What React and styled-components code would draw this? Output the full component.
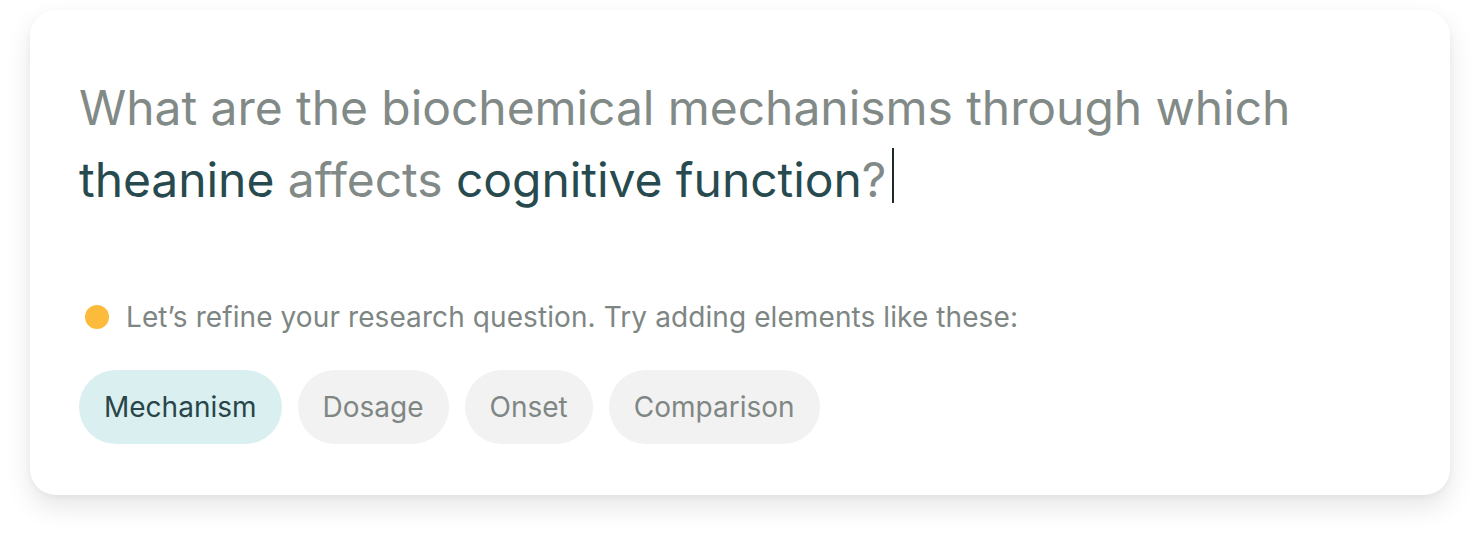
import React from "react";
import styled, { createGlobalStyle } from "styled-components";

const Global = createGlobalStyle`
  html, body { margin: 0; padding: 0; background: #ffffff; }
  body { font-family: Inter, "Noto Sans", sans-serif; -webkit-font-smoothing: antialiased; }
`;

const Page = styled.div`
  box-sizing: border-box;
  min-height: 546px;
  padding: 10px 30px 51px 30px;
`;

const Card = styled.div`
  box-sizing: border-box;
  width: 1420px;
  height: 485px;
  background: #ffffff;
  border-radius: 26px;
  box-shadow: 0 12px 26px rgba(0, 0, 0, 0.1), 0 2px 6px rgba(0, 0, 0, 0.04);
  padding: 62px 48px 50px 49px;
  display: flex;
  flex-direction: column;
`;

const Question = styled.div`
  font-size: 48px;
  line-height: 72px;
  color: #828a87;
  font-weight: 400;
  letter-spacing: -0.06px;
`;

const Key = styled.span`
  color: #274a4f;
`;

const Caret = styled.span`
  display: inline-block;
  width: 2px;
  height: 55px;
  background: #1c2a2c;
  vertical-align: -6px;
  margin-left: 6px;
`;

const Hint = styled.div`
  margin-top: 84px;
  display: flex;
  align-items: center;
  gap: 17px;
  font-size: 28px;
  line-height: 34px;
  letter-spacing: 0.09px;
  color: #7e8683;
`;

const Dot = styled.span`
  width: 24px;
  height: 24px;
  border-radius: 50%;
  background: #fcbb3b;
  flex: none;
  margin-left: 6px;
`;

const Chips = styled.div`
  margin-top: 36px;
  display: flex;
  gap: 16px;
`;

const Chip = styled.button`
  height: 74px;
  padding: 0 25px;
  border: none;
  border-radius: 37px;
  font-family: Inter, "Noto Sans", sans-serif;
  font-size: 28px;
  background: ${(p) => (p.$active ? "#daeff0" : "#f3f2f2")};
  color: ${(p) => (p.$active ? "#284649" : "#7f8784")};
  cursor: pointer;
`;

const chips = ["Mechanism", "Dosage", "Onset", "Comparison"];

export default function App() {
  return (
    <>
      <Global />
      <Page>
        <Card>
          <Question>
            What are the biochemical mechanisms through which
            <br />
            <Key>theanine</Key> affects <Key>cognitive function</Key>?
            <Caret />
          </Question>
          <Hint>
            <Dot />
            Let’s refine your research question. Try adding elements like these:
          </Hint>
          <Chips>
            {chips.map((c, i) => (
              <Chip key={c} $active={i === 0}>
                {c}
              </Chip>
            ))}
          </Chips>
        </Card>
      </Page>
    </>
  );
}
